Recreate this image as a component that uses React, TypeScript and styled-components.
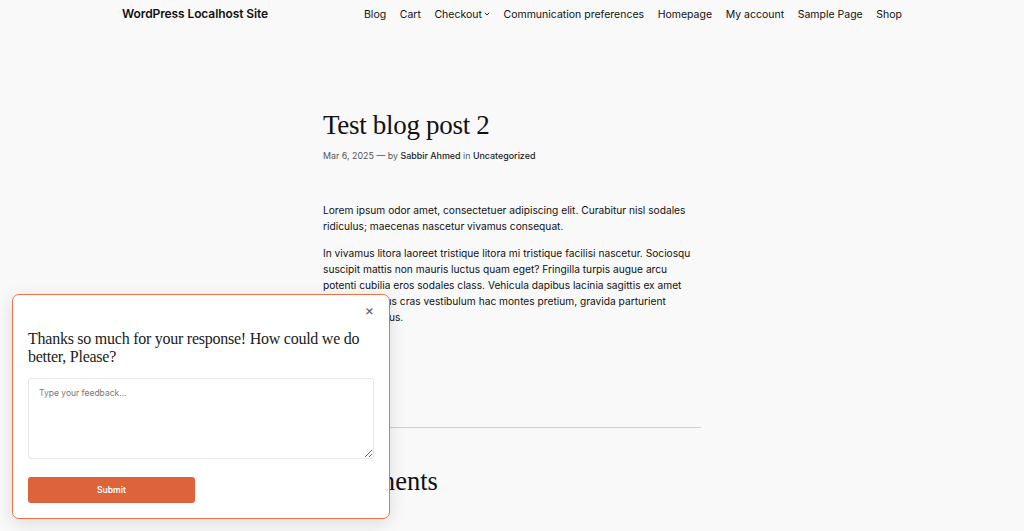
import React from "react";
import styled, { createGlobalStyle } from "styled-components";

const Global = createGlobalStyle`
  html, body { margin: 0; padding: 0; background: #f9f9f9; }
  body { font-family: Inter, "Noto Sans", sans-serif; color: #111; overflow: hidden; height: 531px; }
  * { box-sizing: border-box; }
`;

const Page = styled.div`
  width: 1024px;
  height: 531px;
  position: relative;
  overflow: hidden;
`;

const Header = styled.header`
  display: flex;
  align-items: center;
  justify-content: space-between;
  height: 27px;
  padding: 0 122px 0 122px;
`;

const SiteTitle = styled.div`
  font-size: 12px;
  font-weight: 600;
  letter-spacing: -0.1px;
`;

const Nav = styled.nav`
  display: flex;
  gap: 13.6px;
  font-size: 10.5px;
  padding-top: 1px;
`;

const NavItem = styled.span`
  display: inline-flex;
  align-items: center;
  gap: 2px;
`;

const Main = styled.main`
  width: 378px;
  margin-left: 323px;
  padding-top: 82px;
`;

const Title = styled.h1`
  font-family: "Liberation Serif", serif;
  font-weight: 400;
  font-size: 27px;
  line-height: 32px;
  margin: 0;
  letter-spacing: -0.3px;
`;

const Meta = styled.div`
  margin-top: 9px;
  font-size: 8.9px;
  color: #555;
  strong { font-weight: 500; color: #222; }
`;

const Body = styled.div`
  margin-top: 41px;
  font-size: 10.2px;
  line-height: 16px;
  color: #111;
  p { margin: 0 0 11px 0; }
`;

const Rule = styled.hr`
  border: 0;
  border-top: 1px solid #d0d0d0;
  margin: 102px 0 0 0;
`;

const Comments = styled.h2`
  font-family: "Liberation Serif", serif;
  font-weight: 400;
  font-size: 26.5px;
  line-height: 30px;
  margin: 38px 0 0 0;
`;

const Popup = styled.div`
  position: absolute;
  left: 12px;
  top: 294px;
  width: 378px;
  height: 225px;
  background: #fff;
  border: 1.5px solid #e8734a;
  border-radius: 7px;
  box-shadow: 0 4px 18px rgba(0, 0, 0, 0.12);
  padding: 7px 15px 0 15px;
  display: flex;
  flex-direction: column;
`;

const CloseRow = styled.div`
  display: flex;
  justify-content: flex-end;
  height: 16px;
  padding-right: 0;
`;

const Close = styled.span`
  font-size: 14px;
  color: #555;
  line-height: 16px;
`;

const Question = styled.div`
  font-family: "Liberation Serif", serif;
  font-size: 16px;
  line-height: 18px;
  color: #1b1b1b;
  margin-top: 12px;
  letter-spacing: -0.25px;
`;

const Feedback = styled.textarea`
  margin-top: 12px;
  width: 100%;
  height: 81px;
  border: 1px solid #e6e6e6;
  border-radius: 3px;
  padding: 9px 10px;
  font-family: Inter, sans-serif;
  font-size: 8.5px;
  resize: vertical;
  outline: none;
  &::placeholder { color: #777; }
`;

const SubmitButton = styled.button`
  margin-top: 18px;
  width: 167px;
  height: 26px;
  border: 0;
  border-radius: 3px;
  background: #dc633a;
  color: #fff;
  font-family: Inter, sans-serif;
  font-weight: 600;
  font-size: 8.5px;
`;

const Chevron = () => (
  <svg width="6" height="4" viewBox="0 0 6 4" fill="none">
    <path d="M0.8 0.8L3 3L5.2 0.8" stroke="#111" strokeWidth="0.9" />
  </svg>
);

export default function App() {
  return (
    <Page>
      <Global />
      <Header>
        <SiteTitle>WordPress Localhost Site</SiteTitle>
        <Nav>
          <NavItem>Blog</NavItem>
          <NavItem>Cart</NavItem>
          <NavItem>
            Checkout <Chevron />
          </NavItem>
          <NavItem>Communication preferences</NavItem>
          <NavItem>Homepage</NavItem>
          <NavItem>My account</NavItem>
          <NavItem>Sample Page</NavItem>
          <NavItem>Shop</NavItem>
        </Nav>
      </Header>
      <Main>
        <Title>Test blog post 2</Title>
        <Meta>
          Mar 6, 2025 — by <strong>Sabbir Ahmed</strong> in <strong>Uncategorized</strong>
        </Meta>
        <Body>
          <p>
            Lorem ipsum odor amet, consectetuer adipiscing elit. Curabitur nisl sodales
            ridiculus; maecenas nascetur vivamus consequat.
          </p>
          <p>
            In vivamus litora laoreet tristique litora mi tristique facilisi nascetur. Sociosqu
            suscipit mattis non mauris luctus quam eget? Fringilla turpis augue arcu potenti
            cubilia eros sodales class. Vehicula dapibus lacinia sagittis ex amet nascetur luctus
            cras vestibulum hac montes pretium, gravida parturient nascetur finibus.
          </p>
        </Body>
        <Rule />
        <Comments>Comments</Comments>
      </Main>
      <Popup>
        <CloseRow>
          <Close>×</Close>
        </CloseRow>
        <Question>Thanks so much for your response! How could we do better, Please?</Question>
        <Feedback placeholder="Type your feedback..." />
        <div>
          <SubmitButton>Submit</SubmitButton>
        </div>
      </Popup>
    </Page>
  );
}
